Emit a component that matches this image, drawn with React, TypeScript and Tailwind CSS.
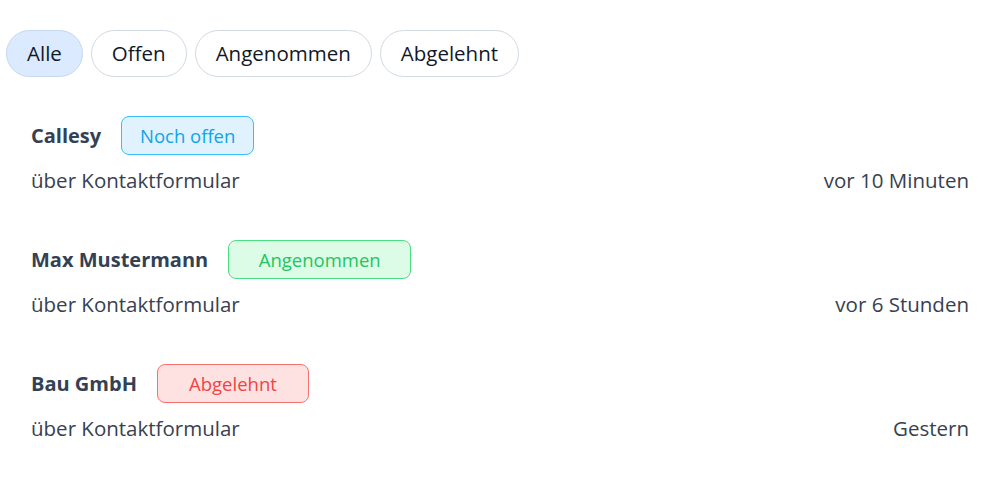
import React from 'react';

const filters = ['Alle', 'Offen', 'Angenommen', 'Abgelehnt'];

const requests = [
    {
        name: 'Callesy',
        status: 'Noch offen',
        badge: 'w-[133px] bg-[#e0f2fe] border-[#38bdf8] text-[#0ea5e9]',
        time: 'vor 10 Minuten',
    },
    {
        name: 'Max Mustermann',
        status: 'Angenommen',
        badge: 'w-[183px] bg-[#dcfce7] border-[#4ade80] text-[#22c55e]',
        time: 'vor 6 Stunden',
    },
    {
        name: 'Bau GmbH',
        status: 'Abgelehnt',
        badge: 'w-[152px] bg-[#fee2e2] border-[#f87171] text-[#ef4444]',
        time: 'Gestern',
    },
];

const App = () => {
    return (
        <div className="min-h-screen bg-white font-['Open_Sans',sans-serif]">
            {/* Filter pills */}
            <div className="flex gap-2 px-[6px] pt-[30px]">
                {filters.map((f, i) => (
                    <button
                        key={f}
                        className={
                            i === 0
                                ? 'h-[47px] px-[20px] rounded-full border border-[#c7d7f0] bg-[#dbeafe] text-[20.5px] text-[#111827]'
                                : 'h-[47px] px-[20px] rounded-full border border-[#d1d9e4] bg-white text-[20.5px] text-[#111827]'
                        }
                    >
                        {f}
                    </button>
                ))}
            </div>

            {/* Request list */}
            <div className="flex flex-col px-[31px] pt-[39px]">
                {requests.map((r) => (
                    <div key={r.name} className="flex flex-col pb-[46px]">
                        <div className="flex items-center gap-5 h-[39px]">
                            <span className="text-[20px] font-bold text-[#334155]">{r.name}</span>
                            <span
                                className={`h-[39px] flex items-center justify-center rounded-lg border text-[18.5px] ${r.badge}`}
                            >
                                {r.status}
                            </span>
                        </div>
                        <div className="flex justify-between items-center mt-[11px] h-[28px] text-[20.5px] text-[#374151]">
                            <span>über Kontaktformular</span>
                            <span>{r.time}</span>
                        </div>
                    </div>
                ))}
            </div>
        </div>
    );
};

export default App;
